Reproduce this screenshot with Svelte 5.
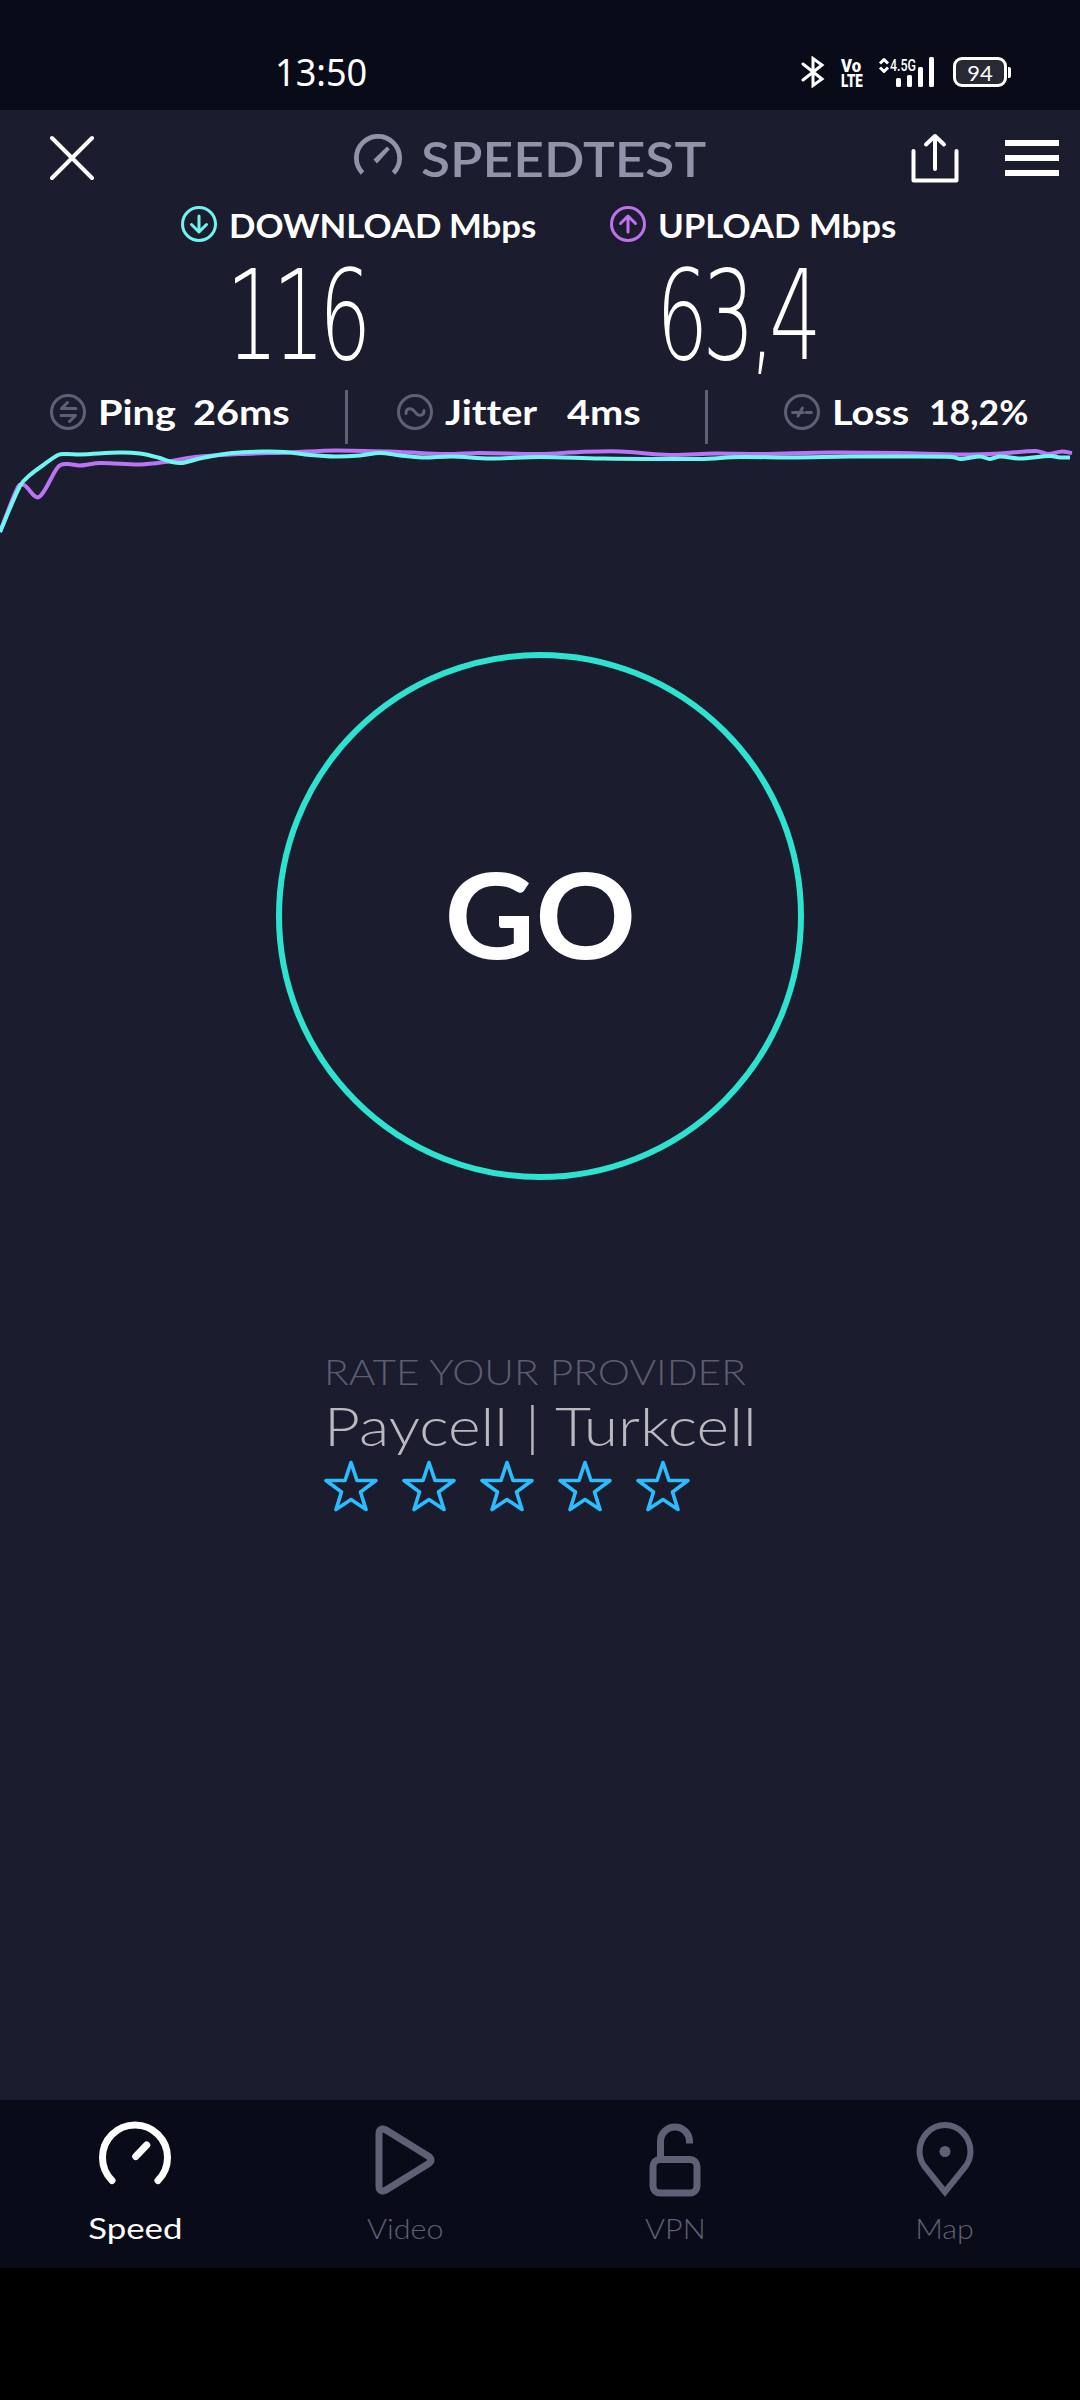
<script lang="ts">
	type Tab = { id: string; label: string; active?: boolean };

	const tabs: Tab[] = [
		{ id: 'speed', label: 'Speed', active: true },
		{ id: 'video', label: 'Video' },
		{ id: 'vpn', label: 'VPN' },
		{ id: 'map', label: 'Map' }
	];

	const stars = [1, 2, 3, 4, 5];

	type Point = [number, number];

	const download: Point[] = [
		[0, 88], [20, 42], [30, 31], [42, 22], [58, 11], [66, 10], [80, 10.5], [120, 8.5], [140, 9.5],
		[158, 13.5], [172, 18], [182, 19], [202, 14], [232, 9], [265, 7.5], [285, 8], [310, 11],
		[335, 12.5], [360, 11.5], [380, 9], [400, 11.5], [422, 13.5], [452, 12.5], [490, 14.5],
		[540, 13], [600, 14.5], [700, 15], [740, 13], [790, 13.5], [850, 12.5], [900, 12.5],
		[952, 13], [960, 15], [980, 12.5], [990, 15], [1000, 12.5], [1020, 14.5], [1050, 12],
		[1060, 13.5], [1070, 13.5]
	];

	const upload: Point[] = [
		[0, 88], [18, 43], [24, 41], [39, 53], [58, 23], [67, 20], [80, 21.5], [100, 19], [140, 20.5],
		[165, 18], [195, 13], [240, 10], [290, 8.5], [335, 6.5], [400, 8], [445, 10], [480, 9],
		[540, 10], [580, 8], [620, 7.5], [670, 11], [715, 9.5], [760, 10], [830, 8.5], [900, 9],
		[960, 10.5], [1000, 9.5], [1036, 7], [1048, 10], [1062, 7.5], [1072, 9]
	];

	// Smooths the samples with horizontal-biased cubic segments
	function toPath(points: Point[]): string {
		let d = `M${points[0][0]} ${points[0][1]}`;
		for (let i = 0; i < points.length - 1; i++) {
			const p0 = points[i - 1] ?? points[i];
			const p1 = points[i];
			const p2 = points[i + 1];
			const p3 = points[i + 2] ?? p2;
			const s1 = (p2[1] - p0[1]) / (p2[0] - p0[0]);
			const s2 = (p3[1] - p1[1]) / (p3[0] - p1[0]);
			const dx = (p2[0] - p1[0]) / 3;
			d += `C${p1[0] + dx} ${p1[1] + s1 * dx} ${p2[0] - dx} ${p2[1] - s2 * dx} ${p2[0]} ${p2[1]}`;
		}
		return d;
	}
</script>

<div class="screen">
	<div class="status">
		<span class="clock">13:50</span>
		<div class="status-icons">
			<svg class="bluetooth" width="24" height="32" viewBox="0 0 24 32">
				<path d="M2 8l19 15-9 6.500V2.500L21 9 2 24" />
			</svg>
			<div class="volte"><span class="vo">Vo</span><span>LTE</span></div>
			<svg class="signal" width="58" height="32" viewBox="0 0 58 32">
				<path class="arrows" d="M3 7.500l4-4 4 4M3 11.500l4 4 4-4" />
				<text x="13" y="15" textLength="26" lengthAdjust="spacingAndGlyphs">4.5G</text>
				<rect x="19" y="22" width="5" height="9" rx="1.500" />
				<rect x="30" y="19" width="5" height="12" rx="1.500" />
				<rect x="41" y="11" width="5" height="20" rx="1.500" />
				<rect x="52" y="1" width="5" height="30" rx="1.500" />
			</svg>
			<div class="battery"><span>94</span></div>
			<div class="battery-tip"></div>
		</div>
	</div>

	<header>
		<svg class="close" width="44" height="46" viewBox="0 0 44 46">
			<path d="M2 3l40 40M42 3L2 43" />
		</svg>
		<svg class="gauge" width="48" height="48" viewBox="0 0 48 48">
			<path class="dial" d="M8.500 39a21.600 21.600 0 1 1 31 0" />
			<path class="needle" d="M19.500 25.500L33 12.500l2.800 2.800L23 29.500z" />
		</svg>
		<span class="brand">SPEEDTEST</span>
		<svg class="share" width="48" height="50" viewBox="0 0 48 50">
			<path d="M2.500 18v29.500h43V18M24 36V3M15 11.500L24 3l9 8.500" />
		</svg>
		<div class="menu"><i></i><i></i><i></i></div>
	</header>

	<div class="labels">
		<svg class="down" width="36" height="36" viewBox="0 0 36 36">
			<circle cx="18" cy="18" r="16.500" />
			<path d="M18 10v16M10.500 18.500L18 26l7.500-7.500" />
		</svg>
		<span class="label dl">DOWNLOAD</span>
		<span class="label unit">Mbps</span>
		<svg class="up" width="36" height="36" viewBox="0 0 36 36">
			<circle cx="18" cy="18" r="16.500" />
			<path d="M18 26V10M10.500 17.500L18 10l7.500 7.500" />
		</svg>
		<span class="label ul">UPLOAD</span>
		<span class="label unit">Mbps</span>
	</div>

	<div class="values">
		<span class="value">116</span>
		<span class="value">63,4</span>
	</div>

	<div class="metrics">
		<div class="metric ping">
			<svg width="36" height="36" viewBox="0 0 36 36">
				<circle cx="18" cy="18" r="16.500" />
				<path d="M26 14.500H11.500l6-6M11 21.500h14.500l-6 6" />
			</svg>
			<span class="name">Ping</span>
			<span>26ms</span>
		</div>
		<div class="metric jitter">
			<svg width="36" height="36" viewBox="0 0 36 36">
				<circle cx="18" cy="18" r="16.500" />
				<path d="M9 19.500c0-6 6-6 9-1.500s9 4.500 9-1.500" />
			</svg>
			<span class="name">Jitter</span>
			<span>4ms</span>
		</div>
		<div class="metric loss">
			<svg width="36" height="36" viewBox="0 0 36 36">
				<circle cx="18" cy="18" r="16.500" />
				<path d="M8.500 18.500h5.500M14 22l4.500-8M17 18.500h2M22 18.500h5.500" />
			</svg>
			<span class="name">Loss</span>
			<span class="percent">18,2%</span>
		</div>
	</div>

	<svg class="chart" width="1080" height="96" viewBox="0 0 1080 96">
		<path class="upload" d={toPath(upload)} />
		<path class="download" d={toPath(download)} />
	</svg>

	<main>
		<button class="go"><span>GO</span></button>

		<div class="provider">
			<span class="rate">RATE YOUR PROVIDER</span>
			<span class="isp">Paycell | Turkcell</span>
			<div class="stars">
				{#each stars as star (star)}
					<svg width="54" height="52" viewBox="0 0 54 52">
						<path d="M27 2.500L33 20.500H52L36.500 32 42 49.500 27 39.500 12 49.500 17.500 32 2 20.500H21z" />
					</svg>
				{/each}
			</div>
		</div>
	</main>

	<nav>
		{#each tabs as tab (tab.id)}
			<div class="tab {tab.id}" class:active={tab.active}>
				<svg width="80" height="80" viewBox="0 0 80 80">
					{#if tab.id === 'speed'}
						<path d="M17 63.500a32.500 32.500 0 1 1 46 0" />
						<path d="M40.700 39.500l11-11.500" />
					{:else if tab.id === 'video'}
						<path d="M14 17v52q0 7 7 4l42-26q6-4 0-8L21 13q-7-3-7 4z" />
					{:else if tab.id === 'vpn'}
						<rect x="18" y="42.500" width="44" height="33.500" rx="7" />
						<path class="butt" d="M25.500 41V24.500a14.300 14.300 0 0 1 29 0v2" />
					{:else}
						<path class="butt" d="M40 75L19.500 49.500A26 26 0 0 1 14.500 35a25.500 27 0 0 1 51 0 26 26 0 0 1-5 14.500z" />
						<circle cx="40" cy="34.500" r="5.500" />
					{/if}
				</svg>
				<span>{tab.label}</span>
			</div>
		{/each}
	</nav>
</div>

<style>
	:global(body) {
		background: #000;
	}

	.screen {
		display: flex;
		flex-direction: column;
		width: 1080px;
		height: 2400px;
		background: #1b1c2e;
		color: #fff;
		font-family: Lato, 'Open Sans', sans-serif;
		font-variant-ligatures: none;
		overflow: hidden;
	}

	svg {
		flex: none;
		display: block;
		fill: none;
		stroke-linecap: round;
		stroke-linejoin: round;
	}

	span {
		display: block;
		flex: none;
		white-space: nowrap;
		transform-origin: left center;
	}

	.status {
		display: flex;
		justify-content: space-between;
		height: 110px;
		padding: 0 69px 0 275px;
		box-sizing: border-box;
		background: #090b19;
	}

	.clock {
		padding-top: 50px;
		font-family: 'Noto Sans', sans-serif;
		font-size: 38px;
		line-height: 42px;
		transform: scaleX(0.95);
	}

	.status-icons {
		display: flex;
		align-items: flex-start;
		padding-top: 56px;
	}

	.bluetooth {
		margin-right: 16px;
		stroke: #fff;
		stroke-width: 3;
		stroke-linejoin: miter;
	}

	.volte {
		width: 22px;
		margin-right: 14px;
		font-family: Roboto, sans-serif;
		font-weight: 900;
		font-size: 19px;
		line-height: 15px;
		padding-top: 2px;
	}

	.volte span {
		transform: scaleX(0.7);
	}

	.volte .vo {
		transform: scaleX(0.88);
	}

	.signal {
		margin-right: 18px;
		fill: #fff;
		overflow: visible;
	}

	.signal text {
		font-family: Roboto, sans-serif;
		font-size: 17px;
		font-weight: 500;
	}

	.arrows {
		fill: none;
		stroke: #fff;
		stroke-width: 3;
		stroke-linecap: butt;
	}

	.battery {
		display: flex;
		align-items: center;
		justify-content: center;
		width: 54px;
		height: 30px;
		margin-top: 1px;
		box-sizing: border-box;
		border: 3px solid #fff;
		border-radius: 9px;
		background: #272935;
		font-size: 22px;
	}

	.battery-tip {
		width: 3px;
		height: 11px;
		margin: 11px 0 0 1px;
		border-radius: 0 2px 2px 0;
		background: #fff;
	}

	header {
		display: flex;
		align-items: center;
		height: 96px;
		padding-left: 50px;
	}

	.close {
		margin-right: 260px;
		stroke: #fff;
		stroke-width: 4;
	}

	.dial {
		stroke: #9293a8;
		stroke-width: 4.8;
		stroke-linecap: butt;
	}

	.needle {
		fill: #9293a8;
	}

	.brand {
		width: 490px;
		margin-left: 19px;
		color: #9293a8;
		font-size: 48px;
		font-weight: 600;
		transform: scaleX(1.11);
	}

	.share {
		margin-right: 46px;
		stroke: #fff;
		stroke-width: 4;
	}

	.menu {
		display: flex;
		flex-direction: column;
		gap: 9px;
		width: 54px;
	}

	.menu i {
		height: 6px;
		background: #fff;
	}

	.labels {
		display: flex;
		height: 36px;
		padding-left: 181px;
	}

	.label {
		padding-top: 2px;
		font-size: 32.5px;
		line-height: 36px;
		font-weight: 700;
		transform: scaleX(1.07);
	}

	.labels path,
	.labels circle {
		stroke-width: 3;
	}

	.down {
		margin-right: 12px;
		stroke: #6ff5ee;
	}

	.up {
		margin-right: 12px;
		stroke: #bf71ee;
	}

	.dl {
		width: 220px;
	}

	.ul {
		width: 151px;
	}

	.unit {
		width: 161px;
	}

	.values {
		display: flex;
		height: 148px;
		padding-left: 226px;
	}

	.value {
		width: 430px;
		padding-top: 12px;
		font-family: 'DejaVu Sans', sans-serif;
		font-weight: 200;
		font-size: 124px;
		line-height: 124px;
		letter-spacing: -9px;
		transform: scaleX(0.665);
	}

	.metrics {
		display: flex;
		height: 54px;
	}

	.metric {
		display: flex;
		box-sizing: border-box;
		padding-top: 4px;
		font-size: 34.5px;
		line-height: 36px;
		font-weight: 700;
	}

	.metric span {
		transform: scaleX(1.15);
	}

	.metric .percent {
		transform: scaleX(1.03);
	}

	.metric svg {
		margin-right: 12px;
		stroke: #5f6075;
		stroke-width: 3;
	}

	.ping {
		width: 348px;
		padding-left: 50px;
		border-right: 3px solid #5f6075;
	}

	.jitter {
		width: 360px;
		padding-left: 49px;
		border-right: 3px solid #5f6075;
	}

	.loss {
		padding-left: 76px;
	}

	.ping .name {
		width: 95px;
	}

	.jitter .name {
		width: 122px;
	}

	.loss .name {
		width: 97px;
	}

	.chart path {
		stroke-width: 4;
		stroke-linecap: butt;
	}

	.chart .upload {
		stroke: #b975f5;
	}

	.chart .download {
		stroke: #70f6f0;
	}

	main {
		display: flex;
		flex: 1;
		flex-direction: column;
		align-items: center;
		padding-top: 112px;
	}

	.go {
		display: flex;
		align-items: center;
		justify-content: center;
		width: 528px;
		height: 528px;
		padding: 0 0 6px;
		border: 6px solid #2de3d0;
		border-radius: 50%;
		background: none;
		color: #fff;
		font-family: inherit;
		font-size: 119px;
		font-weight: 700;
	}

	.go span {
		transform-origin: center;
		transform: scaleX(1.05);
	}

	.provider {
		width: 432px;
		margin-top: 170px;
	}

	.rate {
		color: #5c5d70;
		font-size: 34.5px;
		line-height: 44px;
		font-weight: 300;
		transform: scaleX(1.18);
	}

	.isp {
		color: #b9b9c0;
		font-size: 53px;
		line-height: 64px;
		font-weight: 300;
		transform: scaleX(1.177);
	}

	.stars {
		display: flex;
		gap: 24px;
		margin-top: 2px;
		stroke: #2bbdff;
		stroke-width: 3.6;
	}

	nav {
		display: flex;
		height: 168px;
		margin-bottom: 132px;
		background: #090b19;
		box-shadow: 0 132px #000;
	}

	.tab {
		display: flex;
		flex: 1;
		flex-direction: column;
		align-items: center;
		padding-top: 17px;
		color: #5f6075;
		font-size: 26.5px;
		font-weight: 300;
	}

	.tab svg {
		stroke: currentColor;
		stroke-width: 7;
	}

	.tab .butt {
		stroke-linecap: butt;
		stroke-linejoin: miter;
	}

	.tab.map svg {
		stroke-width: 6;
	}

	.tab.map circle {
		fill: currentColor;
		stroke: none;
	}

	.tab span {
		margin-top: 15px;
		line-height: 34px;
		transform-origin: center;
		transform: scaleX(1.15);
	}

	.tab.active {
		color: #fff;
		font-size: 29px;
		font-weight: 400;
	}

	.tab.active span {
		margin-top: 14px;
		transform: scaleX(1.2);
	}
</style>
